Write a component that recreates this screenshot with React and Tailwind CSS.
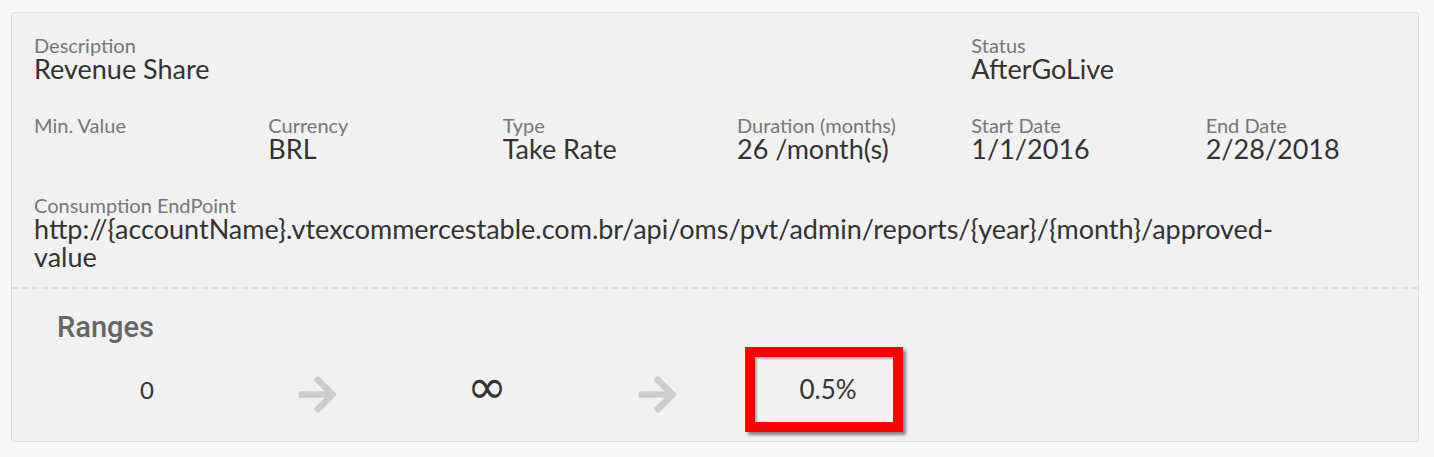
import { FaArrowRight } from "react-icons/fa";

const lato = { fontFamily: "Lato, 'Open Sans', sans-serif" };

function Field({ label, value, className = "" }) {
  return (
    <div className={`pl-[22px] pr-[12px] ${className}`}>
      <p className="text-[20px] leading-[20px] text-[#777]">{label}</p>
      <p className="text-[27px] leading-[28px] text-[#333]">{value || "\u00a0"}</p>
    </div>
  );
}

function Arrow() {
  return (
    <div className="w-[170px] flex justify-center pt-[26px]">
      <FaArrowRight className="text-[#cccccc]" size={43} />
    </div>
  );
}

export default function App() {
  return (
    <div className="min-h-screen bg-[#f8f8f8] pt-[12px] px-[11px]" style={lato}>
      <div className="w-[1408px] border border-[#dcdcdc] rounded-[3px] bg-[#f1f1f1] pb-[9px]">
        <div className="pt-[22px] pb-[16px]">
          <div className="grid grid-cols-6">
            <Field label="Description" value="Revenue Share" className="col-span-4" />
            <Field label="Status" value="AfterGoLive" className="col-span-2" />
          </div>
          <div className="grid grid-cols-6 mt-[32px]">
            <Field label="Min. Value" value="" />
            <Field label="Currency" value="BRL" />
            <Field label="Type" value="Take Rate" />
            <Field label="Duration (months)" value="26 /month(s)" />
            <Field label="Start Date" value="1/1/2016" />
            <Field label="End Date" value="2/28/2018" />
          </div>
          <div className="mt-[32px] pl-[22px] w-[1268px]">
            <p className="text-[20px] leading-[20px] text-[#777]">Consumption EndPoint</p>
            <p className="text-[27px] leading-[28px] text-[#333] break-words">
              http://{"{accountName}"}.vtexcommercestable.com.br/api/oms/pvt/admin/reports/{"{year}"}/{"{month}"}/approved-value
            </p>
          </div>
        </div>
        <div className="border-t-2 border-dashed border-[#dedede]" />
        <div className="pl-[45px] pt-[21px]">
          <h3
            className="text-[29px] leading-[34px] font-medium text-[#666]"
            style={{ fontFamily: "Roboto, 'Open Sans', sans-serif" }}
          >
            Ranges
          </h3>
          <div className="flex items-start mt-[3px] ml-[5px] h-[85px]">
            <div className="w-[170px] h-[85px] flex items-center justify-center text-[24px] text-[#333]">0</div>
            <Arrow />
            <div
              className="w-[170px] h-[85px] flex items-center justify-center text-[48px] leading-none text-[#333] pb-[8px]"
              style={{ fontFamily: "'DejaVu Sans', sans-serif" }}
            >
              ∞
            </div>
            <Arrow />
            <div className="w-[170px]">
              <div className="ml-[3px] w-[158px] h-[85px] border-[10px] border-[#ff0000] shadow-[3px_3px_3px_rgba(0,0,0,0.45),inset_2px_2px_2px_rgba(0,0,0,0.25)] flex items-center justify-center pl-[8px] text-[26px] text-[#333]">
                0.5%
              </div>
            </div>
          </div>
        </div>
      </div>
    </div>
  );
}
